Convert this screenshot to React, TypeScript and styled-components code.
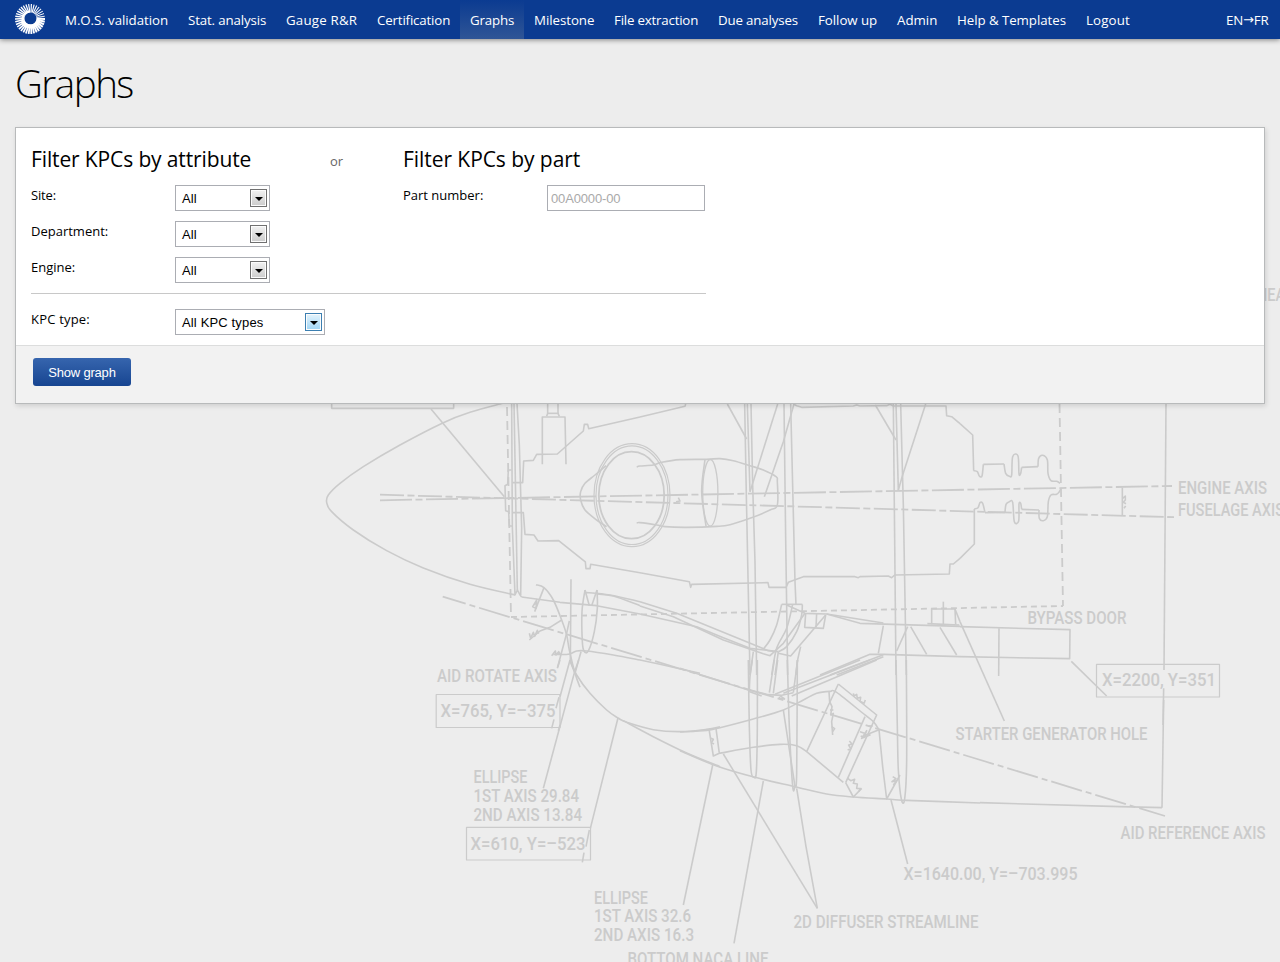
import React from 'react';
import styled, { createGlobalStyle } from 'styled-components';

const GlobalStyle = createGlobalStyle`
  * { box-sizing: border-box; }
  html, body { margin: 0; padding: 0; }
  body {
    height: 962px;
    overflow: hidden;
    background: #ededed;
    color: #000;
    font-family: "Open Sans", "Noto Sans", sans-serif;
    font-size: 13px;
  }
`;

const Page = styled.div`
  position: relative;
  height: 962px;
  overflow: hidden;
`;

const Backdrop = styled.svg`
  position: absolute;
  inset: 0;
  z-index: 0;
  fill: none;
  stroke: #cbcbcb;
  stroke-linejoin: round;
`;

const NavBar = styled.nav`
  position: relative;
  z-index: 1;
  display: flex;
  height: 39px;
  padding-left: 15px;
  background: #0b3b91;
  box-shadow: 0 1px 5px rgba(0, 0, 0, 0.45);
`;

const Logo = styled.svg`
  width: 30px;
  height: 30px;
  margin: 4px 10px 0 0;
`;

const NavItem = styled.a<{ $width: number; $spacing?: number; $active?: boolean }>`
  width: ${p => p.$width}px;
  padding-left: 10px;
  line-height: 40px;
  font-size: 13.3px;
  letter-spacing: ${p => p.$spacing ?? 0}px;
  white-space: nowrap;
  color: #fff;
  background: ${p => (p.$active ? 'linear-gradient(#0b3b91, #2f5596)' : 'none')};
`;

const Language = styled(NavItem)`
  display: flex;
  margin-left: auto;
`;

const LanguageArrow = styled.span`
  font-family: "DejaVu Sans", sans-serif;
  font-size: 13px;
`;

const Main = styled.main`
  position: relative;
  z-index: 1;
  padding: 0 15px;
`;

const Title = styled.h1`
  height: 88px;
  margin: 0;
  padding-top: 17px;
  font-size: 38.5px;
  font-weight: 300;
  line-height: 54px;
  letter-spacing: -1.5px;
`;

const Card = styled.section`
  height: 277px;
  border: 1px solid #b8babb;
  background: #fff;
  box-shadow: 1px 2px 5px rgba(0, 0, 0, 0.13);
`;

const CardBody = styled.div`
  height: 217px;
  padding: 15px 15px 0;
`;

const Filters = styled.div`
  display: flex;
  width: 675px;
  height: 151px;
  border-bottom: 1px solid #c8c8c8;
`;

const FilterColumn = styled.div<{ $width: number }>`
  width: ${p => p.$width}px;
`;

const Heading = styled.h2<{ $spacing: number }>`
  height: 42px;
  margin: 0;
  font-size: 21px;
  font-weight: 400;
  line-height: 32px;
  letter-spacing: ${p => p.$spacing}px;
  white-space: nowrap;
`;

const Or = styled.span`
  width: 73px;
  padding-top: 8px;
  line-height: 20px;
  color: #666;
`;

const Field = styled.div`
  display: flex;
  height: 36px;
`;

const Label = styled.label<{ $spacing?: number }>`
  width: 144px;
  line-height: 20px;
  letter-spacing: ${p => p.$spacing ?? 0}px;
`;

const SelectBox = styled.div<{ $width: number }>`
  display: flex;
  align-items: center;
  justify-content: space-between;
  width: ${p => p.$width}px;
  height: 26px;
  padding: 0 2px 0 6px;
  border: 1px solid #abadb3;
  background: #fff;
  font: 13px "Liberation Sans", Arial, sans-serif;
  letter-spacing: 0.15px;
`;

const Arrow = styled.span<{ $hot?: boolean }>`
  display: flex;
  align-items: center;
  justify-content: center;
  width: 17px;
  height: 18px;
  border: 1px solid ${p => (p.$hot ? '#3c7fb1' : '#707070')};
  box-shadow: inset 0 0 0 1px #fcfcfc;
  background: ${p => (p.$hot ? 'linear-gradient(#e5f4fc, #9fd5f5)' : 'linear-gradient(#f2f2f2, #cccccc)')};
  &::after {
    content: '';
    margin-top: 2px;
    border: 4px solid transparent;
    border-top-color: #000;
    border-bottom: 0;
  }
`;

const TextInput = styled.input`
  width: 158px;
  height: 26px;
  padding: 0 3px;
  border: 1px solid #abadb3;
  font: 13px "Liberation Sans", Arial, sans-serif;
  letter-spacing: -0.15px;
  &::placeholder { color: #a9a9a9; opacity: 1; }
`;

const KpcRow = styled(Field)`
  padding-top: 15px;
  height: 51px;
`;

const CardFooter = styled.footer`
  height: 58px;
  padding: 12px 17px;
  border-top: 1px solid #dcdddd;
  background: #f2f2f2;
`;

const SubmitButton = styled.button`
  display: block;
  width: 98px;
  height: 28px;
  padding: 0;
  border: 0;
  border-radius: 3px;
  background: linear-gradient(#3665ae, #174591);
  color: #fff;
  font: 13px "Liberation Sans", Arial, sans-serif;
  letter-spacing: -0.2px;
`;

type Pt = [number, number];

const parse = (s: string): Pt[] => s.trim().split(/\s+/).map(p => p.split(',').map(Number) as Pt);

/** Smooth path through all the points. */
const smooth = (s: string) => {
  const p = parse(s);
  let d = `M${p[0]}`;
  for (let i = 0; i < p.length - 1; i++) {
    const a = p[i - 1] ?? p[i];
    const b = p[i];
    const c = p[i + 1];
    const e = p[i + 2] ?? c;
    d += `C${b[0] + (c[0] - a[0]) / 6},${b[1] + (c[1] - a[1]) / 6} ${c[0] - (e[0] - b[0]) / 6},${c[1] - (e[1] - b[1]) / 6} ${c}`;
  }
  return d;
};

/** One part of the drawing, in thirds of a pixel from its own origin. */
interface Sheet { at: Pt; lines: string[]; curves: string[] }

const sheets: Sheet[] = [
  {
    at: [320, 395],
    lines: [
      '35,25 35,40 401,40 401,25',
      '333,42 553,305',
      '575,225 565,225 563,268 555,272 557,347 566,350 568,393 578,393',
      '575,25 577,395 585,600 592,585 600,600 605,606',
      '582,25 592,585',
      '591,25 598,150 605,400 602,600',
      '578,263 608,263 611,198 640,196 650,178 712,177 790,108 793,88 803,88 806,101 960,66',
      '578,353 610,353 615,418 642,420 654,438 716,437 796,501 798,521 810,521 812,508 960,533',
      '667,208 667,66 735,66 738,208',
      '683,25 683,55 680,64',
      '714,25 714,55 718,64',
      '683,55 716,55',
      '753,553 751,800 765,835 783,770',
      '605,606 720,622 830,632 960,657',
      '795,585 808,632', '831,585 815,632',
      '672,578 644,650', '652,612 638,635 648,640 650,620 642,630',
      '725,675 690,697 660,708 628,735',
      '628,715 632,730 640,712 644,724 652,706 656,716',
      '748,678 740,715 712,820',
      '695,782 706,768 708,780 716,770 722,780',
    ],
    curves: [
      '560,22 548,25 450,52 370,83 240,150 130,215 60,265 25,300 20,322 35,350 100,405 200,467 310,519 450,568 585,600',
      '858,212 825,240 795,265 782,290 782,315 795,345 830,375 860,395',
      '648,569 672,578 700,615 725,675 740,720 748,765 765,835 780,877',
      '795,585 786,650 787,740 792,768 805,768 823,710 832,640 831,585',
      '793,592 870,600 960,620',
      '830,597 880,603 960,632',
      '700,778 745,778 770,768 800,768 880,780 960,795',
    ],
  },
  {
    at: [640, 395],
    lines: [
      '0,66 135,34 137,27',
      '460,27 470,32 485,37 640,33 650,30 660,33 740,32 750,28 760,33 918,33 920,62 935,65 960,86',
      '960,490 940,507 930,507 928,537 765,540 755,548 745,543 660,545 655,548 645,545 490,545 445,562 438,577 387,577 384,563 155,568 152,577 148,560 0,533',
      '314,27 319,300 330,840', '322,27 330,290', '333,27 338,270 345,500 350,840',
      '432,27 437,430 443,840', '452,27 465,560 468,630',
      '760,27 768,840', '768,27 775,285', '782,27 790,330 799,840',
      '262,27 320,132', '413,27 330,290', '462,27 430,140 373,305', '706,30 768,135', '857,27 788,240 775,285',
      '0,620 110,655 385,767 415,770',
      '0,633 100,665 250,735 370,776 390,782 430,745 495,655',
      '0,657 170,695 250,728 330,760 400,768',
      '425,628 487,628',
      '497,655 494,697 550,700 557,660', '530,655 528,697',
      '557,660 452,783 415,775',
      '440,630 495,655 560,657 730,684',
      '560,657 660,685 760,688 960,694',
      '730,692 715,775', '803,695 770,768', '812,695 860,778', '900,697 950,780',
      '875,688 875,642 945,642 947,688', '910,620 910,688', '862,686 958,690',
      '945,642 960,680',
      '540,840 690,778 730,778 960,785', '570,840 730,779', '590,840 730,785',
      '115,308 120,318 108,320',
    ],
    curves: [
      '-10,216 0,213 40,210 65,202 120,194 200,193 240,191 280,197 330,212 370,225 408,245 412,260 412,330 390,345 330,370 270,389 230,394 140,397 75,395 50,390 0,383 -10,384',
      '195,193 185,290 198,393',
      '0,795 60,808 180,835',
      '425,628 410,690 390,735 370,762',
      '487,628 485,660 470,710 440,755 415,770',
      '458,628 440,700 410,760 395,840',
      '415,770 405,840', '482,755 472,800 468,840', '340,770 330,840',
    ],
  },
  {
    at: [960, 395],
    lines: [
      '0,86 38,120 41,227', '43,342 43,447 0,490',
      '70,208 132,207', '185,217 234,215', '75,353 135,352', '185,343 237,345',
      '0,680 133,978', '0,695 330,704 329,791 0,785', '117,700 116,843',
      '618,27 612,825', '611,880 609,990', '334,799 440,903',
      '487,278 487,360', '488,310 496,303 496,315 490,322 498,326', '497,333 492,340',
    ],
    curves: [
      '41,227 52,230 58,243 66,243 70,208',
      '132,207 137,235 148,244 155,240 158,185 174,183 177,237 182,235 185,217',
      '234,215 236,190 248,181 262,195 264,235 273,257 290,259 300,265',
      '303,280 298,290 290,298 273,300 265,320 262,365 250,377 238,370 237,345',
      '185,343 182,325 177,327 176,378 163,380 158,322 148,320 138,328 135,352',
      '75,353 68,325 60,323 54,338 43,342',
    ],
  },
  {
    at: [420, 660],
    lines: [
      '476,0 464,35 370,385', '450,0 420,110',
      '420,0 413,22', '417,112 408,145', '402,178 395,205', '420,195 415,212',
      '594,174 511,505', '508,510 498,560', '492,578 487,607',
    ],
    curves: [
      '450,0 470,45 510,100 560,150 594,174 620,187 700,209 780,215 860,208 900,200',
      '610,182 700,230 800,279 900,320',
    ],
  },
  {
    at: [680, 660],
    lines: [
      '0,25 205,90', '475,72 590,165 497,368', '475,72 380,275 490,367', '555,170 475,352',
      '497,368 520,411 545,385', '87,207 100,288 118,280 108,205',
      '597,209 550,228', '597,209 608,320 620,417 660,345', '310,150 345,380',
      '205,90 265,104 305,106 340,98', '205,94 245,108',
      '268,98 283,0', '280,100 293,0', '340,98 353,0',
      '285,103 540,0', '310,100 570,0', '335,108 590,0',
      '98,315 10,735', '130,282 412,745', '250,363 162,850', '350,385 378,560 412,745', '633,420 683,612',
      '447,95 449,125 456,140 452,165 460,160 455,185 458,225', '450,150 460,150', '455,200 464,206 458,215',
      '540,215 570,225 545,235 560,212 552,232 542,228', '565,198 578,198',
      '520,100 522,108 530,103 532,115 542,112 540,124 552,130 556,120',
      '503,270 512,266 506,255 516,252 508,243',
      '503,355 512,362 524,358 520,370 532,372 530,385 542,386 536,395',
      '638,350 648,356 636,365 650,362 640,375', '93,235 100,238 95,248 102,252',
      '298,110 300,116 314,116', '300,107 315,118',
    ],
    curves: [
      '0,216 80,211 120,203 220,177 310,150 370,120 410,100 450,94 470,97 555,165 580,185 597,209',
      '118,280 220,262 300,253 350,257 380,275',
      '0,272 110,318 225,352 345,380 440,402 520,411 620,417 680,421 900,429',
      '205,0 208,200 213,330 222,352 229,335 232,200 232,0', '217,0 210,50 208,90',
      '322,0 328,200 338,378 345,378 350,340 352,0',
      '648,0 652,200 655,330 664,417 674,417 680,300 679,0',
    ],
  },
  { at: [960, 700], lines: ['60,308 480,320 606,323', '611,0 606,323'], curves: [] },
];

const annotations: [string, number, number, number][] = [
  ['HEAT', 1257, 301, 36],
  ['ENGINE AXIS', 1178, 494.5, 89],
  ['FUSELAGE AXIS', 1178, 516, 106],
  ['BYPASS DOOR', 1027.5, 624, 99],
  ['X=2200, Y=351', 1102, 686.5, 114],
  ['STARTER GENERATOR HOLE', 955.5, 740.3, 192],
  ['AID REFERENCE AXIS', 1120.5, 839.3, 145],
  ['X=1640.00, Y=–703.995', 903.5, 880.5, 174],
  ['2D DIFFUSER STREAMLINE', 793.5, 928.5, 185],
  ['BOTTOM NACA LINE', 627.5, 965.3, 141],
  ['AID ROTATE AXIS', 437, 682, 120],
  ['X=765, Y=–375', 440.5, 717.5, 115],
  ['ELLIPSE', 473.5, 783.5, 54],
  ['1ST AXIS 29.84', 473.5, 802.3, 105.5],
  ['2ND AXIS 13.84', 473.5, 821, 108.5],
  ['X=610, Y=–523', 470.5, 850.5, 115],
  ['ELLIPSE', 594, 904, 54],
  ['1ST AXIS 32.6', 594, 922.7, 97],
  ['2ND AXIS 16.3', 594, 941.5, 100],
];

const Blueprint = () => (
  <Backdrop width="1280" height="962" viewBox="0 0 1280 962">
    {sheets.map((s, i) => (
      <g key={i} transform={`translate(${s.at}) scale(0.33333)`} strokeWidth="4.8">
        {s.lines.map(l => <polyline key={l} points={l} />)}
        {s.curves.map(c => <path key={c} d={smooth(c)} />)}
      </g>
    ))}
    <g strokeWidth="1.8">
      <ellipse cx="632" cy="495.2" rx="38" ry="51.5" strokeWidth="1.2" />
      <ellipse cx="632" cy="495.2" rx="36" ry="49.3" strokeWidth="1.2" />
      <ellipse cx="631.5" cy="495.2" rx="32.7" ry="43.5" />
      <ellipse cx="710.3" cy="492.8" rx="7.6" ry="33.3" strokeWidth="1.3" />
      <path d="M380 500.3L1172 486" strokeDasharray="32 3.5 7 3.5" />
      <path d="M380 494.7L1174 517.2" strokeDasharray="24 3.5 7 3.5" />
      <path d="M442.7 596.7L1165 816" strokeDasharray="32 4 6 4" strokeDashoffset="8" />
      <path d="M507 407L511 617M1059.5 404L1063 606" strokeDasharray="9 5" />
      <path d="M511 617L1063 606" strokeDasharray="6 4" />
    </g>
    <g strokeWidth="1.2">
      <rect x="1096.5" y="664.3" width="123" height="32.7" />
      <rect x="436.2" y="694.5" width="123.8" height="33" />
      <rect x="466.5" y="827.3" width="124" height="32.7" />
    </g>
    <g fill="#cbcbcb" stroke="none" fontFamily="Roboto, sans-serif" fontSize="18.4" fontWeight="500">
      {annotations.map(([text, x, y, w]) => (
        <text key={text + y} x={x} y={y - 0.5} textLength={w} lengthAdjust="spacingAndGlyphs">{text}</text>
      ))}
    </g>
  </Backdrop>
);

const RAY_COUNT = 34;

const LogoMark = () => (
  <Logo viewBox="0 0 30 30" stroke="#fff">
    {Array.from({ length: RAY_COUNT }, (_, i) => {
      const turn = i / RAY_COUNT;
      const a = turn * Math.PI * 2;
      return (
        <line
          key={i}
          x1={15.5 + Math.cos(a) * 6}
          y1={14.5 + Math.sin(a) * 6}
          x2={15 + Math.cos(a) * 15}
          y2={15 + Math.sin(a) * 15}
          strokeWidth={2.1 - turn * 1.2}
        />
      );
    })}
    <path d="M24 15.5A8.6 8.6 0 0 1 7.5 17" fill="none" strokeWidth="4" />
    <path d="M7.8 17A7.5 7.5 0 0 1 15 7.5" fill="none" strokeWidth="1.8" />
  </Logo>
);

const navItems: [string, number, number][] = [
  ['M.O.S. validation', 123, -0.06],
  ['Stat. analysis', 98, -0.14],
  ['Gauge R&R', 91, 0.2],
  ['Certification', 93, -0.16],
  ['Graphs', 64, -0.16],
  ['Milestone', 80, -0.05],
  ['File extraction', 104, -0.2],
  ['Due analyses', 100, -0.15],
  ['Follow up', 79, -0.05],
  ['Admin', 60, 0],
  ['Help & Templates', 129, -0.06],
  ['Logout', 64, 0.15],
];

interface SelectProps { value: string; width: number; hot?: boolean }

const Select = ({ value, width, hot }: SelectProps) => (
  <SelectBox $width={width}>
    {value}
    <Arrow $hot={hot} />
  </SelectBox>
);

export default function App() {
  return (
    <Page>
      <GlobalStyle />
      <Blueprint />
      <NavBar>
        <LogoMark />
        {navItems.map(([label, width, spacing]) => (
          <NavItem key={label} $width={width} $spacing={spacing} $active={label === 'Graphs'}>{label}</NavItem>
        ))}
        <Language $width={64} $spacing={-0.2}>EN<LanguageArrow>→</LanguageArrow>FR</Language>
      </NavBar>
      <Main>
        <Title>Graphs</Title>
        <Card>
          <CardBody>
            <Filters>
              <FilterColumn $width={299}>
                <Heading $spacing={-0.13}>Filter KPCs by attribute</Heading>
                <Field><Label $spacing={-0.15}>Site:</Label><Select value="All" width={95} /></Field>
                <Field><Label>Department:</Label><Select value="All" width={95} /></Field>
                <Field><Label>Engine:</Label><Select value="All" width={95} /></Field>
              </FilterColumn>
              <Or>or</Or>
              <FilterColumn $width={302}>
                <Heading $spacing={-0.06}>Filter KPCs by part</Heading>
                <Field><Label>Part number:</Label><TextInput placeholder="00A0000-00" /></Field>
              </FilterColumn>
            </Filters>
            <KpcRow><Label $spacing={0.2}>KPC type:</Label><Select value="All KPC types" width={150} hot /></KpcRow>
          </CardBody>
          <CardFooter>
            <SubmitButton>Show graph</SubmitButton>
          </CardFooter>
        </Card>
      </Main>
    </Page>
  );
}
